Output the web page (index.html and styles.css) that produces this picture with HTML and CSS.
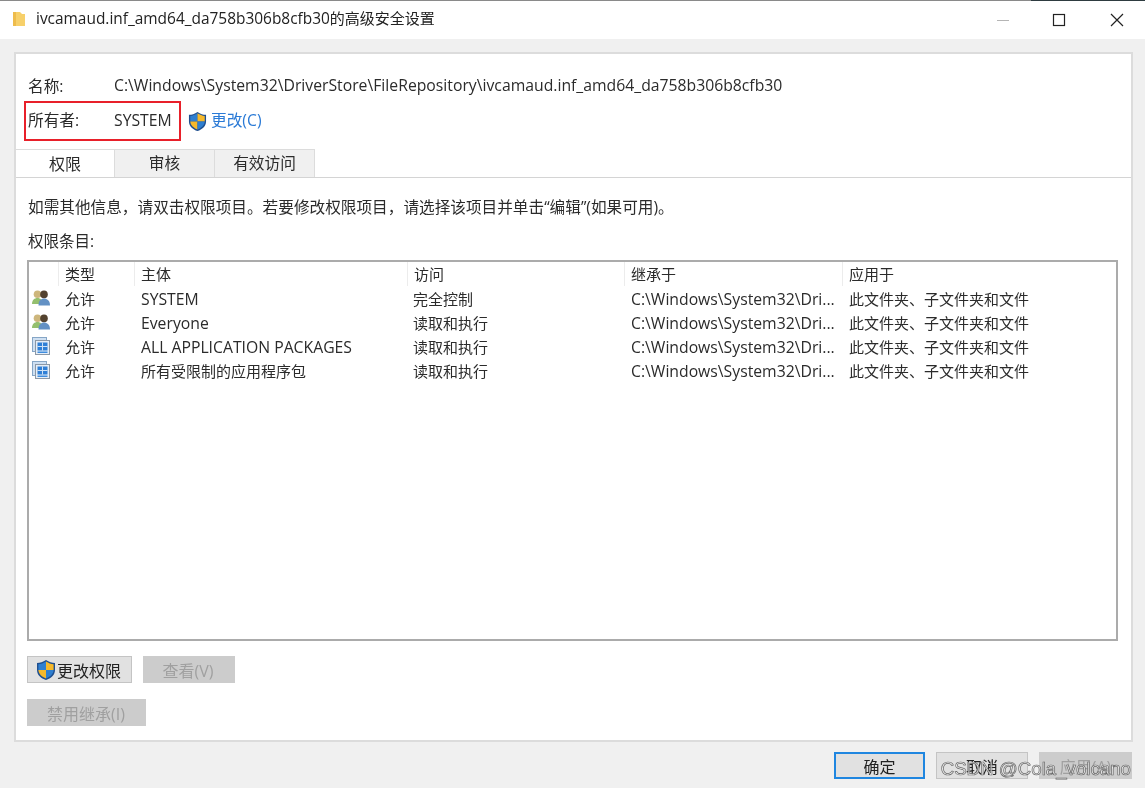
FILE: index.html
```html
<!DOCTYPE html>
<html lang="zh-CN">
<head>
  <meta charset="UTF-8">
  <meta name="viewport" content="width=device-width, initial-scale=1.0">
  <title>高级安全设置</title>
  <link rel="stylesheet" href="styles.css">
</head>
<body>
  <svg class="defs" width="0" height="0">
    <symbol id="shield" viewBox="0 0 20 22">
      <path d="M10 1 C7 3 4 4 1 4 V11 C1 16 5 19.5 10 21 C15 19.5 19 16 19 11 V4 C16 4 13 3 10 1 Z" fill="#1f4f8f"/>
      <path d="M10 2.4 C7.5 4 5 5 2.4 5.2 V11 H10 Z" fill="#2f7fd0"/>
      <path d="M10 2.4 C12.5 4 15 5 17.6 5.2 V11 H10 Z" fill="#f6b92b"/>
      <path d="M2.4 11 H10 V19.4 C6 18 2.6 15 2.4 11 Z" fill="#f6b92b"/>
      <path d="M17.6 11 H10 V19.4 C14 18 17.4 15 17.6 11 Z" fill="#2f7fd0"/>
    </symbol>
    <symbol id="users" viewBox="0 0 18 16">
      <circle cx="5.5" cy="4.2" r="3.8" fill="#cdb67c"/>
      <path d="M0 14 C0 10 2.5 8 5.5 8 C8.5 8 10.5 10 10.5 14 Z" fill="#94bf6e"/>
      <circle cx="12" cy="4.4" r="3.8" fill="#53422f"/>
      <path d="M6.5 15.5 C6.5 10.5 9 8.5 12 8.5 C15 8.5 18 10.5 18 15.5 Z" fill="#6391c4"/>
    </symbol>
    <symbol id="package" viewBox="0 0 18 18">
      <rect x="0.5" y="0.5" width="14" height="14" fill="#cfe0f2" stroke="#86a6c6"/>
      <rect x="3.5" y="3.5" width="14" height="14" fill="#e6eef7" stroke="#8c98a6"/>
      <rect x="5.5" y="5.5" width="10" height="8" fill="#2f7fd6"/>
      <path d="M5.5 9.5 H15.5 M10.5 5.5 V13.5" stroke="#cfe2f6" stroke-width="1"/>
      <rect x="5.5" y="14.5" width="10" height="1.5" fill="#3f8cde"/>
    </symbol>
  </svg>

  <div class="window">
    <div class="titlebar">
      <svg class="folder" width="14" height="16" viewBox="0 0 14 16">
        <path d="M1 1 H8 L10 3 H13 V15 H1 Z" fill="#f7d06a"/>
        <path d="M1 1 H4 V15 H1 Z" fill="#eebc4c"/>
      </svg>
      <span class="title"><span class="en-title">ivcamaud.inf_amd64_da758b306b8cfb30</span>的高级安全设置</span>
      <div class="window-btns">
        <svg class="win-min" width="14" height="14" viewBox="0 0 14 14"><path d="M1 7.5 H13" stroke="#b5b5b5"/></svg>
        <svg width="14" height="14" viewBox="0 0 14 14"><rect x="1.5" y="1.5" width="11" height="11" fill="none" stroke="#222" stroke-width="1.2"/></svg>
        <svg width="14" height="14" viewBox="0 0 14 14"><path d="M1 1 L13 13 M13 1 L1 13" stroke="#222" stroke-width="1.2"/></svg>
      </div>
    </div>

    <div class="content">
      <div class="panel">
        <div class="name-row">
          <span class="label">名称:</span>
          <span class="en">C:\Windows\System32\DriverStore\FileRepository\ivcamaud.inf_amd64_da758b306b8cfb30</span>
        </div>
        <div class="owner-row">
          <div class="owner-box">
            <span class="label">所有者:</span>
            <span class="en">SYSTEM</span>
          </div>
          <svg class="shield" width="19" height="21"><use href="#shield"/></svg>
          <a class="change-link">更改(C)</a>
        </div>

        <div class="tabs">
          <div class="tab active">权限</div>
          <div class="tab">审核</div>
          <div class="tab">有效访问</div>
        </div>

        <div class="tab-body">
          <p class="hint">如需其他信息，请双击权限项目。若要修改权限项目，请选择该项目并单击“编辑”(如果可用)。</p>
          <p class="list-title">权限条目:</p>

          <div class="list">
            <div class="row head">
              <span></span>
              <span>类型</span>
              <span>主体</span>
              <span>访问</span>
              <span>继承于</span>
              <span>应用于</span>
            </div>
            <div class="row">
              <svg width="18" height="16"><use href="#users"/></svg>
              <span>允许</span>
              <span class="en">SYSTEM</span>
              <span>完全控制</span>
              <span class="en">C:\Windows\System32\Dri...</span>
              <span>此文件夹、子文件夹和文件</span>
            </div>
            <div class="row">
              <svg width="18" height="16"><use href="#users"/></svg>
              <span>允许</span>
              <span class="en">Everyone</span>
              <span>读取和执行</span>
              <span class="en">C:\Windows\System32\Dri...</span>
              <span>此文件夹、子文件夹和文件</span>
            </div>
            <div class="row">
              <svg width="18" height="18"><use href="#package"/></svg>
              <span>允许</span>
              <span class="en">ALL APPLICATION PACKAGES</span>
              <span>读取和执行</span>
              <span class="en">C:\Windows\System32\Dri...</span>
              <span>此文件夹、子文件夹和文件</span>
            </div>
            <div class="row">
              <svg width="18" height="18"><use href="#package"/></svg>
              <span>允许</span>
              <span>所有受限制的应用程序包</span>
              <span>读取和执行</span>
              <span class="en">C:\Windows\System32\Dri...</span>
              <span>此文件夹、子文件夹和文件</span>
            </div>
          </div>

          <div class="actions">
            <button class="btn btn-change">
              <svg width="20" height="22"><use href="#shield"/></svg>更改权限
            </button>
            <button class="btn btn-view" disabled>查看(V)</button>
          </div>
          <div class="actions second">
            <button class="btn btn-inherit" disabled>禁用继承(I)</button>
          </div>
        </div>
      </div>

      <div class="footer">
        <button class="btn btn-foot btn-ok">确定</button>
        <button class="btn btn-foot">取消</button>
        <button class="btn btn-foot btn-apply" disabled>应用(A)</button>
      </div>
    </div>

    <div class="watermark">CSDN @Cola_volcano</div>
  </div>
</body>
</html>
```

FILE: styles.css
```css
* { box-sizing: border-box; }
html, body {
  margin: 0;
  padding: 0;
  height: 100%;
  overflow: hidden;
}
body {
  font-family: "Open Sans", "Noto Sans CJK SC", sans-serif;
  font-size: 15.7px;
  color: #2b2b2b;
  background: #fff;
}
.defs { position: absolute; }
.en { font-size: 15.75px; }
.window {
  position: relative;
  height: 788px;
  display: flex;
  flex-direction: column;
  border-top: 1px solid #8a8a8a;
  border-image: linear-gradient(90deg, #8a8a8a 90%, #2e3b40 90%) 1;
  filter: blur(0.5px);
}

.titlebar {
  height: 38px;
  flex: none;
  display: flex;
  align-items: center;
  padding-left: 12px;
  background: #fff;
}
.folder { margin-right: 10px; margin-bottom: 2px; }
.title { color: #222; font-size: 15px; margin-bottom: 4px; }
.en-title { font-size: 15.45px; }
.window-btns {
  margin-left: auto;
  display: flex;
  gap: 44px;
  padding-right: 21px;
}
.win-min { margin-right: -2px; }

.content {
  flex: 1;
  background: #f0f0f0;
  padding: 13px 12px 0 14px;
  display: flex;
  flex-direction: column;
}
.panel {
  height: 690px;
  flex: none;
  background: #fff;
  border: 2px solid #dcdcdc;
  padding-top: 18px;
}

.name-row {
  height: 26px;
  display: flex;
  align-items: center;
  padding-left: 12px;
}
.label { width: 86px; flex: none; }

.owner-row {
  display: flex;
  align-items: center;
  margin-top: 3px;
  margin-left: 8px;
}
.owner-box {
  width: 157px;
  height: 40px;
  display: flex;
  align-items: center;
  padding: 0 0 3px 2px;
  border: 2px solid #e8202a;
}
.shield { margin-left: 7px; margin-right: 4px; }
.change-link { color: #2a7ad6; padding-bottom: 3px; }

.tabs {
  display: flex;
  margin-top: 8px;
}
.tab {
  width: 100px;
  height: 28px;
  display: flex;
  align-items: center;
  justify-content: center;
  padding-bottom: 3px;
  background: #f0f0f0;
  border: 1px solid #dcdcdc;
  border-left: 0;
  border-bottom: 0;
}
.tab.active {
  width: 99px;
  padding-bottom: 2px;
  font-size: 16px;
  background: #fff;
}

.tab-body {
  border-top: 1px solid #d4d4d4;
  padding: 0 13px 0 11px;
}
.hint {
  margin: 18px 0 0 1px;
  height: 22px;
  line-height: 22px;
  font-size: 15.65px;
}
.list-title {
  margin: 12px 0 0 1px;
  height: 22px;
  line-height: 22px;
  font-size: 15.5px;
}

.list {
  margin-top: 8px;
  height: 381px;
  border: 2px solid #ababab;
  font-size: 15px;
}
.row {
  display: grid;
  grid-template-columns: 29px 76px 273px 217px 218px 1fr;
  height: 24px;
  align-items: center;
  white-space: nowrap;
}
.row > svg { margin-left: 3px; }
.row > span { padding-left: 7px; overflow: hidden; }
.row > span:nth-child(4) { padding-left: 6px; }
.row > .en { padding-top: 2px; }
.row.head > span {
  height: 24px;
  padding-left: 6px;
  padding-top: 1px;
  line-height: 23px;
  border-left: 1px solid #ececec;
}
.row.head > span:first-child { border-left: 0; }

.actions {
  display: flex;
  gap: 11px;
  margin-top: 15px;
}
.actions.second { margin-top: 16px; }
.btn {
  height: 27px;
  padding: 0;
  font-family: inherit;
  font-size: 16px;
  color: #222;
  background: #e1e1e1;
  border: 1px solid #c4c4c4;
  display: flex;
  align-items: center;
  justify-content: center;
}
.btn:disabled {
  color: #a0a0a0;
  background: #cccccc;
  border-color: #cccccc;
}
.btn-change { width: 105px; gap: 1px; padding-right: 2px; }
.btn-view { width: 92px; padding-right: 2px; }
.btn-inherit { width: 119px; padding-right: 1px; }

.footer {
  display: flex;
  justify-content: flex-end;
  gap: 11px;
  margin-top: 10px;
  margin-right: 1px;
}
.btn-foot { width: 92px; }
.btn-apply { width: 93px; }
.btn-ok { width: 91px; border: 2px solid #1f86e0; }

/* blog watermark, sits over the footer buttons */
.watermark {
  position: absolute;
  right: 14px;
  bottom: 8px;
  font-family: "Liberation Sans", sans-serif;
  font-size: 18.7px;
  color: rgba(245, 245, 245, 0.75);
  -webkit-text-stroke: 0.7px #666;
}
```
